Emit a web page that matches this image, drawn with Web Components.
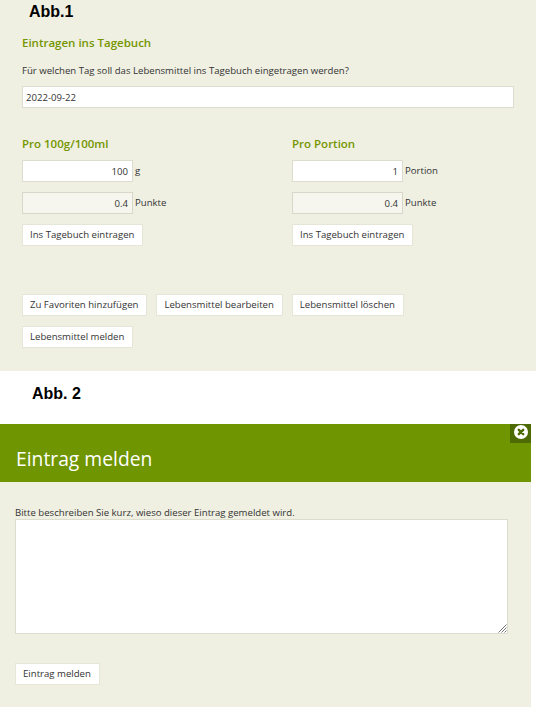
<!DOCTYPE html>
<html lang="de">
<head>
<meta charset="utf-8">
<title>Abb</title>
<style>
    html, body { margin: 0; padding: 0; background: #fff; }
    body { width: 536px; height: 712px; overflow: hidden; font-family: "Open Sans", sans-serif; font-size: 9.6px; color: #333; }
</style>
</head>
<body>
<diary-panel>
    <fig-label style="--pad-left: 29px; --top: 3px; --height: 17px">Abb.1</fig-label>
</diary-panel>
<fig-label style="--pad-left: 32px; --top: 14px; --height: 53px">Abb. 2</fig-label>
<report-dialog></report-dialog>

<script>
    const fieldCss = `
        .field { box-sizing: border-box; display: block; background: #fff; border: 1px solid #dcdccf; font: 9.6px/1 "Open Sans", sans-serif; color: #333; outline: none; }
    `

    customElements.define('fig-label', class extends HTMLElement {
        constructor() {
            super()
            this.attachShadow({mode: 'open'}).innerHTML = `
                <style>
                    :host { display: block; box-sizing: border-box; height: var(--height); padding: var(--top) 0 0 var(--pad-left); font: bold 16px/17px "Liberation Sans", Arial, sans-serif; color: #000; }
                </style>
                <slot></slot>`
        }
    })

    customElements.define('plain-button', class extends HTMLElement {
        constructor() {
            super()
            this.attachShadow({mode: 'open'}).innerHTML = `
                <style>
                    :host { display: inline-block; }
                    button { box-sizing: border-box; height: 22px; padding: 0 8px 0 7px; background: #fff; border: 1px solid #e6e6d8; font: 9.6px/1 "Open Sans", sans-serif; color: #333; white-space: nowrap; }
                </style>
                <button type="button"><slot></slot></button>`
        }
    })

    customElements.define('amount-row', class extends HTMLElement {
        constructor() {
            super()
            const value = this.getAttribute('value')
            const unit = this.getAttribute('unit')
            const readonly = this.hasAttribute('readonly')
            this.attachShadow({mode: 'open'}).innerHTML = `
                <style>
                    :host { display: flex; align-items: center; gap: 2px; }
                    ${fieldCss}
                    .field { width: 111px; height: 22px; padding: 0 4px; text-align: right; }
                    .field[readonly] { background: #f6f6ef; border-color: #d8d8ca; }
                    span { line-height: 22px; }
                </style>
                <input class="field" value="${value}" ${readonly ? 'readonly' : ''}>
                <span>${unit}</span>`
        }
    })

    customElements.define('portion-column', class extends HTMLElement {
        constructor() {
            super()
            const title = this.getAttribute('title-text')
            const value = this.getAttribute('value')
            const unit = this.getAttribute('unit')
            this.attachShadow({mode: 'open'}).innerHTML = `
                <style>
                    :host { display: flex; flex-direction: column; width: 270px; flex: none; }
                    h3 { margin: 0 0 8px; font: 600 11.5px/16px "Open Sans", sans-serif; color: #759600; }
                    amount-row { margin-bottom: 10px; }
                    plain-button { align-self: flex-start; }
                </style>
                <h3>${title}</h3>
                <amount-row value="${value}" unit="${unit}"></amount-row>
                <amount-row value="0.4" unit="Punkte" readonly></amount-row>
                <plain-button>Ins Tagebuch eintragen</plain-button>`
        }
    })

    customElements.define('diary-panel', class extends HTMLElement {
        constructor() {
            super()
            this.attachShadow({mode: 'open'}).innerHTML = `
                <style>
                    :host { display: block; box-sizing: border-box; height: 371px; background: #efefe2; }
                    ${fieldCss}
                    .body { padding: 18px 22px 0; }
                    h2 { margin: 0 0 13px; font: 600 11.5px/16px "Open Sans", sans-serif; color: #759600; }
                    p { margin: 0 0 8px; line-height: 14px; }
                    .date { width: 492px; height: 22px; padding: 0 3px; }
                    .cols { display: flex; margin-top: 28px; }
                    .actions { display: flex; flex-wrap: wrap; gap: 10px 9px; margin-top: 48px; }
                </style>
                <slot></slot>
                <div class="body">
                    <h2>Eintragen ins Tagebuch</h2>
                    <p>Für welchen Tag soll das Lebensmittel ins Tagebuch eingetragen werden?</p>
                    <input class="field date" value="2022-09-22">
                    <div class="cols">
                        <portion-column title-text="Pro 100g/100ml" value="100" unit="g"></portion-column>
                        <portion-column title-text="Pro Portion" value="1" unit="Portion"></portion-column>
                    </div>
                    <div class="actions">
                        <plain-button>Zu Favoriten hinzufügen</plain-button>
                        <plain-button>Lebensmittel bearbeiten</plain-button>
                        <plain-button>Lebensmittel löschen</plain-button>
                        <plain-button>Lebensmittel melden</plain-button>
                    </div>
                </div>`
        }
    })

    customElements.define('report-dialog', class extends HTMLElement {
        constructor() {
            super()
            this.attachShadow({mode: 'open'}).innerHTML = `
                <style>
                    :host { display: block; position: relative; box-sizing: border-box; width: 531px; height: 283px; background: #efefe2; }
                    ${fieldCss}
                    header { box-sizing: border-box; height: 58px; padding: 21px 16px 0; background: #6f9500; color: #fff; font: 19.3px/28px "Open Sans", sans-serif; }
                    .close { position: absolute; top: 0; right: 0; box-sizing: border-box; width: 21px; height: 19px; padding-top: 1px; display: flex; align-items: flex-start; justify-content: center; background: #4d6a05; }
                    .body { padding: 24px 15px 0; }
                    p { margin: 0; line-height: 13px; }
                    .note { position: relative; width: 493px; }
                    .text { width: 493px; height: 115px; margin: 0; padding: 4px; resize: none; background: #fff; }
                    .grip { position: absolute; right: 1px; bottom: 1px; display: block; }
                    plain-button { display: block; margin-top: 29px; }
                </style>
                <header>Eintrag melden</header>
                <div class="close">
                    <svg width="14" height="14" viewBox="0 0 14 14">
                        <circle cx="7" cy="7" r="7" fill="#fff"/>
                        <path d="M4.8 4.8 9.2 9.2M9.2 4.8 4.8 9.2" stroke="#4d6a05" stroke-width="2.4" stroke-linecap="round"/>
                    </svg>
                </div>
                <div class="body">
                    <p>Bitte beschreiben Sie kurz, wieso dieser Eintrag gemeldet wird.</p>
                    <div class="note">
                        <textarea class="field text"></textarea>
                        <svg class="grip" width="9" height="9" viewBox="0 0 9 9">
                            <path d="M8.5 0.5 0.5 8.5M8.5 3.5 3.5 8.5M8.5 6.5 6.5 8.5" stroke="#777" stroke-width="1"/>
                        </svg>
                    </div>
                    <plain-button>Eintrag melden</plain-button>
                </div>`
        }
    })
</script>
</body>
</html>
